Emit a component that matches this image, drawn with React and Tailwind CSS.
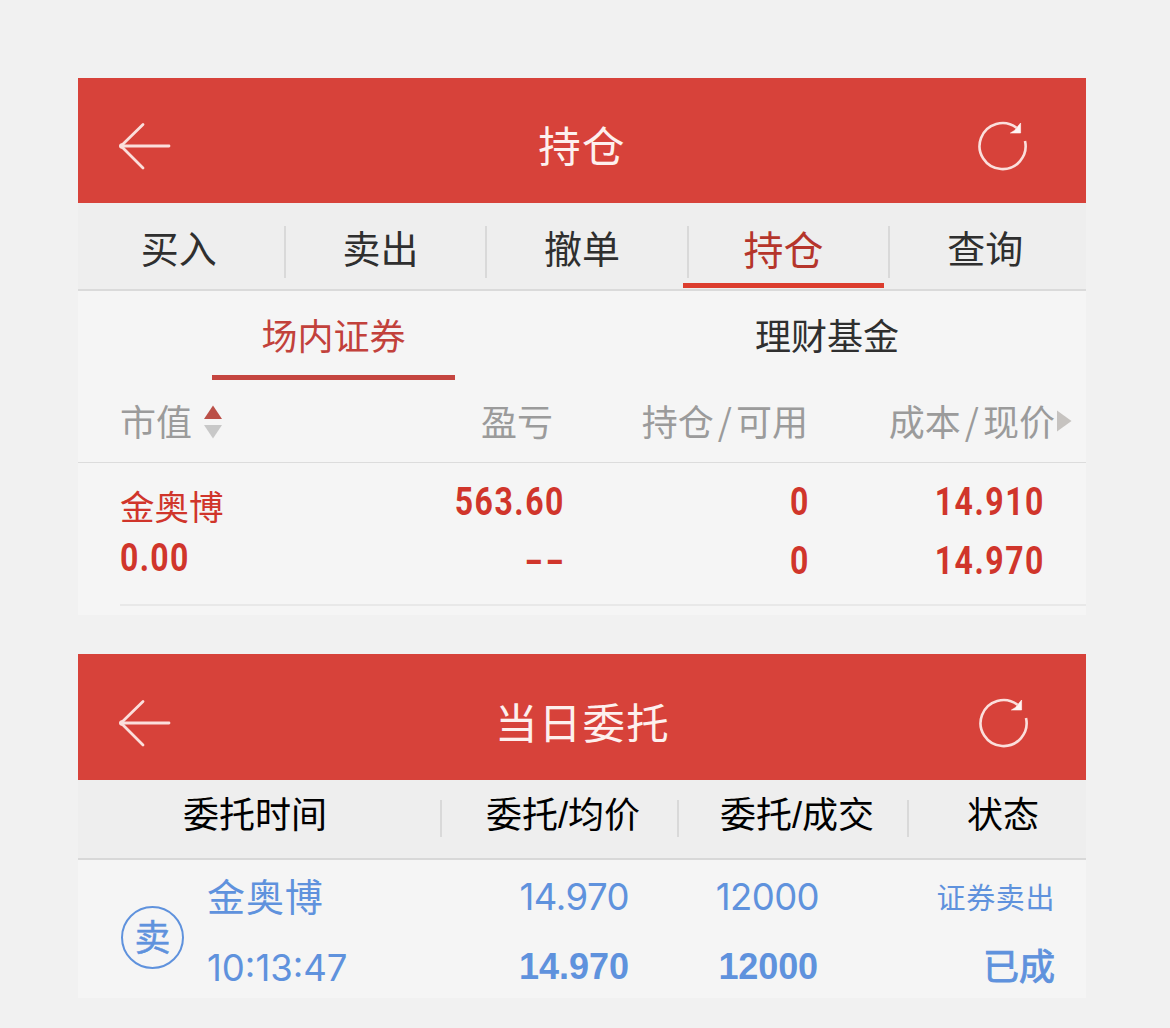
import React from "react";

const CJK = "font-['Noto_Sans_CJK_SC',sans-serif]";

function Header({ title, className }) {
  return (
    <header className={`flex justify-between bg-[#d7423a] pl-[41px] text-[#fdf0ee] ${className}`}>
      <svg className="mt-[43px] h-[50px] w-[52px]" viewBox="0 0 52 50" fill="none" stroke="#fbdfdc" strokeWidth="2.8" strokeLinecap="round">
        <path d="M2 25H50" />
        <path d="M24 3.5L2 25L24 47" />
        <circle cx="2.8" cy="25" r="1.3" fill="#fdf0ee" />
      </svg>
      <h1 className="mt-[44px] ml-[16px] text-[42.5px] leading-[43px] tracking-[1.3px]">{title}</h1>
      <svg className="mt-[43px] h-[50px] w-[50px]" viewBox="0 0 50 50" fill="none" stroke="#fbdfdc" strokeWidth="2.6">
        <path d="M48 20A23 23 0 1 1 39.5 6.8" />
        <path d="M43.6 2V12H33.4L37.5 9.5L40.3 6Z" fill="#fff6f5" stroke="#fff6f5" strokeWidth="0.6" />
      </svg>
    </header>
  );
}

function Tab({ label, active, divider }) {
  return (
    <div className="relative flex justify-center">
      {active ? (
        <span className="mt-[25px] text-[40px] leading-[40px] text-[#b5352b]">{label}</span>
      ) : (
        <span className="mt-[25px] text-[38px] leading-[38px] text-[#2f2f2f]">{label}</span>
      )}
      {divider && <i className="absolute top-[23px] -right-[6px] h-[52px] w-[2px] bg-[#d9d9d9]" />}
      {active && <i className="absolute bottom-[1px] left-0 h-[5px] w-full bg-[#dc3d2e]" />}
    </div>
  );
}

function Pair({ a, b }) {
  return (
    <span>
      {a}
      <span className="mx-[4px]">/</span>
      {b}
    </span>
  );
}

function Din({ children, className }) {
  return (
    <span className={`block font-['Roboto',sans-serif] text-[39px] leading-[40px] font-bold ${className}`}>
      {children}
    </span>
  );
}

const LEFT = "origin-left scale-x-[0.82] tracking-[1.6px]";
const RIGHT = "origin-right scale-x-[0.82] tracking-[1.9px]";
const DASH = "mr-[-1px] origin-right scale-x-[1.3] tracking-[0.8px]";

export default function App() {
  return (
    <main className={`h-[1028px] w-[1170px] overflow-hidden bg-[#f1f1f1] pt-[78px] pl-[78px] ${CJK}`}>
      <section className="h-[537px] w-[1008px] bg-[#f5f5f5]">
        <Header title="持仓" className="h-[125px] pr-[59px]" />

        <nav className="grid h-[88px] grid-cols-5 border-b-2 border-[#dadada] bg-[#eeeeee]">
          <Tab label="买入" divider />
          <Tab label="卖出" divider />
          <Tab label="撤单" divider />
          <Tab label="持仓" divider active />
          <Tab label="查询" />
        </nav>

        <div className="flex h-[89px] text-[36px] leading-[36px]">
          <div className="ml-[134px] flex w-[243px] flex-col items-center justify-between text-[#c2413b]">
            <span className="mt-[25px]">场内证券</span>
            <i className="h-[5px] w-full bg-[#c54540]" />
          </div>
          <span className="mt-[25px] ml-[300px] text-[#2f2f2f]">理财基金</span>
        </div>

        <div className="grid h-[83px] grid-cols-[320px_155px_255px_1fr] border-b border-[#dcdcdc] pt-[22px] text-[36px] leading-[36px] text-[#9b9b9b]">
          <div className="flex pl-[42px]">
            市值
            <svg className="mt-[3px] ml-[11px] h-[34px] w-[20px]" viewBox="0 0 20 34">
              <path d="M10 0.5L19 14H1Z" fill="#bb5048" />
              <path d="M1 20H19L10 33.5Z" fill="#c8c8c8" />
            </svg>
          </div>
          <span className="text-right">盈亏</span>
          <span className="text-right"><Pair a="持仓" b="可用" /></span>
          <div className="flex justify-end pr-[14px]">
            <Pair a="成本" b="现价" />
            <svg className="mt-[8px] -ml-px h-[22px] w-[18px]" viewBox="0 0 18 22">
              <path d="M3 0.5L17.5 11L3 21.5Z" fill="#c6c3c0" />
            </svg>
          </div>
        </div>

        <div className="ml-[42px] grid h-[143px] grid-cols-[200px_245px_245px_1fr] border-b-2 border-[#e8e8e8] text-[#d0352b]">
          <div>
            <p className="mt-[25px] text-[34.5px] leading-[35px]">金奥博</p>
            <div className="mt-[15px]"><Din className={LEFT}>0.00</Din></div>
          </div>
          <div className="pt-[19px] text-right">
            <Din className={RIGHT}>563.60</Din>
            <div className="mt-[19px]"><Din className={DASH}>--</Din></div>
          </div>
          <div className="pt-[19px] text-right">
            <Din className={RIGHT}>0</Din>
            <div className="mt-[19px]"><Din className={RIGHT}>0</Din></div>
          </div>
          <div className="pt-[19px] pr-[41px] text-right">
            <Din className={RIGHT}>14.910</Din>
            <div className="mt-[19px]"><Din className={RIGHT}>14.970</Din></div>
          </div>
        </div>
      </section>

      <section className="mt-[39px] h-[344px] w-[1008px] bg-[#f5f5f5]">
        <Header title="当日委托" className="h-[126px] pt-px pr-[58px]" />

        <div className="grid h-[80px] grid-cols-[364px_237px_230px_1fr] border-b-2 border-[#d8d8d8] bg-[#eeeeee] font-['Liberation_Sans','Noto_Sans_CJK_SC',sans-serif] text-[36px] leading-[36px] text-black">
          <div className="flex">
            <span className="mt-[18px] ml-[105px]">委托时间</span>
            <i className="mt-[20px] ml-auto h-[37px] w-[2px] bg-[#d9d9d9]" />
          </div>
          <div className="flex">
            <span className="mt-[18px] ml-[44px]">委托/均价</span>
            <i className="mt-[20px] ml-auto h-[37px] w-[2px] bg-[#d9d9d9]" />
          </div>
          <div className="flex">
            <span className="mt-[18px] ml-[41px]">委托/成交</span>
            <i className="mt-[20px] ml-auto h-[37px] w-[2px] bg-[#d9d9d9]" />
          </div>
          <span className="mt-[18px] ml-[58px]">状态</span>
        </div>

        <div className="grid h-[138px] grid-cols-[129px_242px_180px_190px_1fr] text-[#5f92dd]">
          <div className="mt-[46px] ml-[43px] flex h-[63px] w-[63px] justify-center rounded-full border-[2.4px] border-[#5f92dd]">
            <span className="mt-[9px] text-[36px] leading-[36px] [-webkit-text-stroke:0.4px]">卖</span>
          </div>
          <div>
            <p className="mt-[16px] text-[38px] leading-[38px] tracking-[0.9px]">金奥博</p>
            <p className="mt-[34px] font-['Inter',sans-serif] text-[36.5px] leading-[40px]">10:13:47</p>
          </div>
          <div className="text-right">
            <p className="mt-[17px] font-['Inter',sans-serif] text-[36.5px] leading-[40px] tracking-[-0.5px]">14.970</p>
            <p className="mt-[30px] font-['Liberation_Sans',sans-serif] text-[36px] leading-[40px] font-bold">14.970</p>
          </div>
          <div className="text-right">
            <p className="mt-[17px] font-['Inter',sans-serif] text-[36.5px] leading-[40px] tracking-[-0.6px]">12000</p>
            <p className="mt-[30px] mr-px font-['Liberation_Sans',sans-serif] text-[36px] leading-[40px] font-bold tracking-[-0.1px]">12000</p>
          </div>
          <div className="pr-[31px] text-right">
            <p className="mt-[22px] text-[29px] leading-[29px] tracking-[0.6px]">证券卖出</p>
            <p className="mt-[35px] text-[36px] leading-[36px] [-webkit-text-stroke:0.9px]">已成</p>
          </div>
        </div>
      </section>
    </main>
  );
}
